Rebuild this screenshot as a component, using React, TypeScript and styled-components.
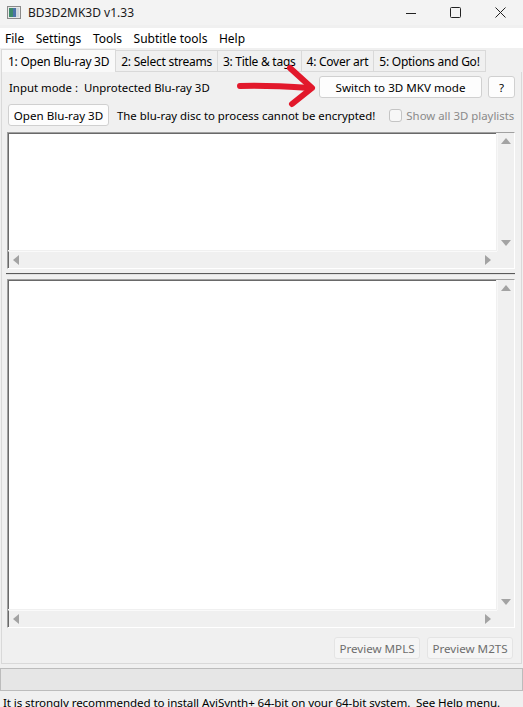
import React from "react";
import styled, { createGlobalStyle } from "styled-components";

const Global = createGlobalStyle`
  html, body { margin: 0; padding: 0; }
  body {
    width: 523px; height: 707px; overflow: hidden;
    font-family: "Segoe UI", "Noto Sans", "Open Sans", sans-serif;
    font-size: 11.4px; color: #000; background: #f0f0f0;
  }
`;

const Window = styled.div`
  position: relative;
  width: 523px; height: 707px;
  display: flex; flex-direction: column;
  background: #f0f0f0;
  overflow: hidden;
  font-size: 11.4px;
`;

const TitleBar = styled.div`
  height: 25px; background: #f3f3f3;
  display: flex; align-items: center;
  padding-left: 7px;
  flex-shrink: 0;
`;
const TitleText = styled.span`
  margin-left: 7px; font-size: 12px; color: #1a1a1a;
`;
const Controls = styled.div`
  margin-left: auto; display: flex; height: 100%;
`;
const Ctrl = styled.div`
  width: 45px; height: 100%;
  display: flex; align-items: center; justify-content: center;
`;

const MenuBar = styled.div`
  height: 20px; background: #ffffff;
  display: flex; align-items: center;
  margin-top: 3px;
  flex-shrink: 0;
`;
const MenuItem = styled.span`
  padding: 0 5px; font-size: 12px; margin-right: 1.5px;
`;

const TabBar = styled.div`
  height: 24px; display: flex; align-items: flex-end;
  padding-left: 1px;
  flex-shrink: 0;
`;
const Tab = styled.div<{ $active?: boolean }>`
  height: ${(p) => (p.$active ? 23 : 22)}px;
  box-sizing: border-box;
  padding: 0 ${(p) => (p.$active ? 6 : 5)}px;
  display: flex; align-items: center;
  font-size: 12px;
  letter-spacing: -0.25px;
  background: ${(p) => (p.$active ? "#f9f9f9" : "#f0f0f0")};
  border: 1px solid #d9d9d9;
  border-bottom: ${(p) => (p.$active ? "none" : "1px solid #d9d9d9")};
  margin-right: -1px;
`;

const Panel = styled.div`
  margin: 0 1px;
  height: 592px;
  box-sizing: border-box;
  border: 1px solid #d9d9d9;
  border-top: none;
  background: #f0f0f0;
  display: flex; flex-direction: column;
  padding: 4px 6px 0 4px;
  flex-shrink: 0;
`;

const Row = styled.div<{ $mt?: number }>`
  display: flex; align-items: center; height: 22px;
  margin-top: ${(p) => p.$mt ?? 0}px;
`;
const Spacer = styled.div`
  flex: 1;
`;
const Label = styled.span<{ $ml?: number; $disabled?: boolean }>`
  margin-left: ${(p) => p.$ml ?? 0}px;
  color: ${(p) => (p.$disabled ? "#8a8a8a" : "#000")};
  white-space: nowrap;
`;
const Button = styled.button<{ $w: number; $ml?: number; $disabled?: boolean }>`
  width: ${(p) => p.$w}px; height: 22px;
  flex-shrink: 0;
  margin-left: ${(p) => p.$ml ?? 0}px;
  box-sizing: border-box;
  font-family: inherit; font-size: 11.6px;
  color: ${(p) => (p.$disabled ? "#6d6d6d" : "#000")};
  background: ${(p) => (p.$disabled ? "#f5f5f5" : "#fdfdfd")};
  border: 1px solid ${(p) => (p.$disabled ? "#e4e4e4" : "#d0d0d0")};
  border-radius: 3px;
  padding: 0;
  white-space: nowrap;
`;
const Check = styled.span`
  flex-shrink: 0;
  width: 13px; height: 13px; box-sizing: border-box;
  border: 1px solid #c4c4c4; border-radius: 3px; background: #f7f7f7;
  margin-left: 14px; margin-right: 4px;
`;

const ListFrame = styled.div<{ $h: number; $mt?: number }>`
  height: ${(p) => p.$h}px; box-sizing: border-box;
  margin-top: ${(p) => p.$mt ?? 0}px;
  margin-left: 1px;
  border: 1px solid;
  border-color: #a0a0a0 #ffffff #ffffff #a0a0a0;
  display: grid;
  grid-template-columns: 1fr 17px;
  grid-template-rows: 1fr 17px;
  background: #f0f0f0;
  flex-shrink: 0;
`;
const ListBody = styled.div`
  background: #fff;
  border-top: 1px solid #696969;
  border-left: 1px solid #696969;
  margin-right: 1px; margin-bottom: 1px;
`;
const VScroll = styled.div`
  background: #f0f0f0;
  display: flex; flex-direction: column; justify-content: space-between; align-items: center;
  padding: 5px 0;
  border-left: 1px solid #f7f7f7;
`;
const HScroll = styled.div`
  background: #f0f0f0;
  border-left: 1px solid #696969;
  border-top: 1px solid #fafafa;
  display: flex; justify-content: space-between; align-items: center;
  padding: 0 6px 0 4px;
`;
const Corner = styled.div`
  background: #f0f0f0;
`;

const Splitter = styled.div`
  height: 10px; display: flex; align-items: center; flex-shrink: 0;
`;
const SplitLine = styled.div`
  flex: 1; height: 1px; background: #5a5a5a; margin-top: -1px;
  border-bottom: 1px solid #e0e0e0;
`;

const ButtonRow = styled.div`
  display: flex; justify-content: flex-end; margin-top: 9px; padding-right: 2px;
`;

const Progress = styled.div`
  height: 23px; box-sizing: border-box;
  margin-top: 4px;
  border: 1px solid #bcbcbc;
  background: #e6e6e6;
  flex-shrink: 0;
`;
const Status = styled.div`
  margin-top: 4px; padding-left: 3px; font-size: 11.6px; white-space: nowrap;
  line-height: 16px;
  letter-spacing: -0.1px;
`;

const ArrowOverlay = styled.svg`
  position: absolute; left: 236px; top: 63px;
`;

const Tri = ({ dir }: { dir: "up" | "down" | "left" | "right" }) => {
  const pts = {
    up: "0,6 5,0 10,6",
    down: "0,0 10,0 5,6",
    left: "6,0 6,10 0,5",
    right: "0,0 6,5 0,10",
  }[dir];
  const w = dir === "up" || dir === "down" ? 10 : 6;
  const h = dir === "up" || dir === "down" ? 6 : 10;
  return (
    <svg width={w} height={h}>
      <polygon points={pts} fill="#a3a3a3" />
    </svg>
  );
};

const List = ({ h, mt }: { h: number; mt?: number }) => (
  <ListFrame $h={h} $mt={mt}>
    <ListBody />
    <VScroll>
      <Tri dir="up" />
      <Tri dir="down" />
    </VScroll>
    <HScroll>
      <Tri dir="left" />
      <Tri dir="right" />
    </HScroll>
    <Corner />
  </ListFrame>
);

export default function App() {
  return (
    <>
      <Global />
      <Window>
        <TitleBar>
          <svg width="14" height="13" viewBox="0 0 14 13">
            <rect x="0.5" y="0.5" width="13" height="12" fill="#e8e8e8" stroke="#8a8a8a" />
            <rect x="2" y="2" width="4" height="9" fill="#3d8a6a" />
            <rect x="6" y="2" width="3" height="9" fill="#4c73a8" />
            <rect x="9" y="2" width="3" height="9" fill="#cfd6dc" />
          </svg>
          <TitleText>BD3D2MK3D v1.33</TitleText>
          <Controls>
            <Ctrl>
              <svg width="10" height="10"><line x1="0" y1="5.5" x2="10" y2="5.5" stroke="#222" /></svg>
            </Ctrl>
            <Ctrl>
              <svg width="11" height="11"><rect x="0.5" y="0.5" width="10" height="10" rx="1" fill="none" stroke="#222" /></svg>
            </Ctrl>
            <Ctrl>
              <svg width="11" height="11"><path d="M0.5 0.5 L10.5 10.5 M10.5 0.5 L0.5 10.5" stroke="#222" /></svg>
            </Ctrl>
          </Controls>
        </TitleBar>
        <MenuBar>
          <MenuItem>File</MenuItem>
          <MenuItem>Settings</MenuItem>
          <MenuItem>Tools</MenuItem>
          <MenuItem>Subtitle tools</MenuItem>
          <MenuItem>Help</MenuItem>
        </MenuBar>
        <TabBar>
          <Tab $active>1: Open Blu-ray 3D</Tab>
          <Tab>2: Select streams</Tab>
          <Tab>3: Title &amp; tags</Tab>
          <Tab>4: Cover art</Tab>
          <Tab>5: Options and Go!</Tab>
        </TabBar>
        <Panel>
          <Row>
            <Label $ml={3}>Input mode :&nbsp;&nbsp;Unprotected Blu-ray 3D</Label>
            <Spacer />
            <Button $w={163}>Switch to 3D MKV mode</Button>
            <Button $w={27} $ml={6}>?</Button>
          </Row>
          <Row $mt={6}>
            <Button $w={101} $ml={2}>Open Blu-ray 3D</Button>
            <Label $ml={8}>The blu-ray disc to process cannot be encrypted!</Label>
            <Check />
            <Label $disabled>Show all 3D playlists</Label>
          </Row>
          <List h={137} mt={6} />
          <Splitter>
            <SplitLine />
          </Splitter>
          <List h={349} />
          <ButtonRow>
            <Button $w={86} $disabled>Preview MPLS</Button>
            <Button $w={86} $ml={7} $disabled>Preview M2TS</Button>
          </ButtonRow>
        </Panel>
        <Progress />
        <Status>It is strongly recommended to install AviSynth+ 64-bit on your 64-bit system.&nbsp; See Help menu.</Status>
        <ArrowOverlay width="84" height="48" viewBox="0 0 84 48">
          <path d="M4 23 Q30 22 74 25" stroke="#e2182b" strokeWidth="6" fill="none" strokeLinecap="round" />
          <path d="M54 5 L76 25 L56 41" stroke="#e2182b" strokeWidth="6" fill="none" strokeLinecap="round" strokeLinejoin="round" />
        </ArrowOverlay>
      </Window>
    </>
  );
}
